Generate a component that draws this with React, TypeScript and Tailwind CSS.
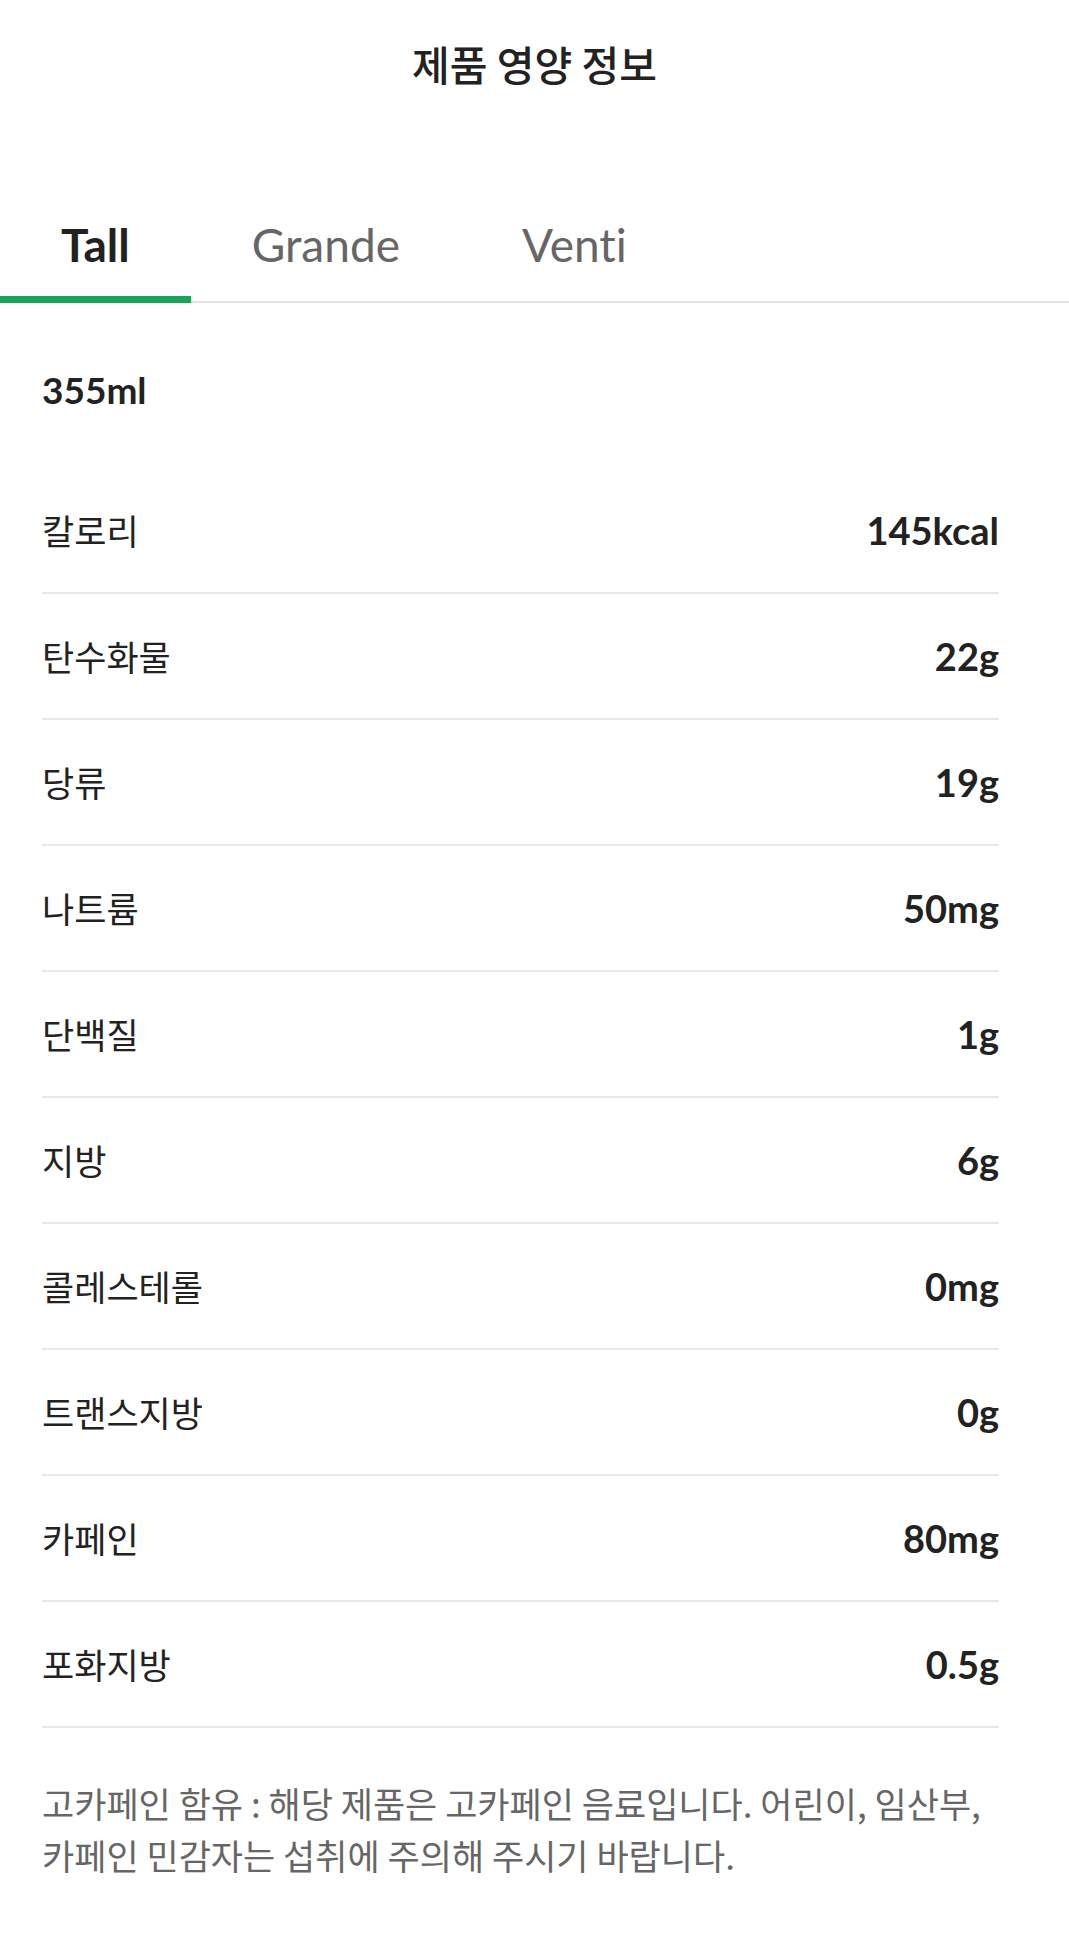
import { useState } from "react";

const SIZES = ["Tall", "Grande", "Venti"];

const ROWS: [string, string][] = [
  ["칼로리", "145kcal"],
  ["탄수화물", "22g"],
  ["당류", "19g"],
  ["나트륨", "50mg"],
  ["단백질", "1g"],
  ["지방", "6g"],
  ["콜레스테롤", "0mg"],
  ["트랜스지방", "0g"],
  ["카페인", "80mg"],
  ["포화지방", "0.5g"],
];

export default function App() {
  const [active, setActive] = useState(0);

  return (
    <div className="min-h-screen w-full bg-white font-['Lato','Noto_Sans_CJK_KR',sans-serif] text-[#222] [font-variant-ligatures:none]">
      {/* header */}
      <div className="flex h-[126px] items-center justify-center">
        <h1 className="font-['Noto_Sans_CJK_KR',sans-serif] text-[41px] font-medium leading-none text-[#222]">
          제품 영양 정보
        </h1>
      </div>

      {/* size tabs */}
      <div className="mt-[62px] flex border-b-2 border-[#e3e3e3]">
        {SIZES.map((s, i) => (
          <button
            key={s}
            onClick={() => setActive(i)}
            className={
              "-mb-[2px] border-b-[7px] px-[61px] pt-[27px] pb-[21px] text-[46px] leading-[60px] " +
              (i === active
                ? "border-[#19a35d] font-bold text-[#222]"
                : "border-transparent font-normal text-[#666]")
            }
          >
            {s}
          </button>
        ))}
      </div>

      <div className="pl-[42px] pr-[70px]">
        <div className="pt-[63px] pb-[54px] text-[37px] font-bold leading-[48px]">355ml</div>

        {ROWS.map(([label, value]) => (
          <div
            key={label}
            className="flex h-[126px] items-center justify-between border-b-2 border-[#e8e8e8]"
          >
            <span className="font-['Noto_Sans_CJK_KR',sans-serif] text-[35px] text-[#222]">{label}</span>
            <span className="text-[38px] font-bold text-[#222]">{value}</span>
          </div>
        ))}

        <p className="pt-[49px] pb-[55px] font-['Noto_Sans_CJK_KR',sans-serif] text-[35px] leading-[52px] text-[#666]">
          고카페인 함유 : 해당 제품은 고카페인 음료입니다. 어린이, 임산부,
          <br />
          카페인 민감자는 섭취에 주의해 주시기 바랍니다.
        </p>
      </div>
    </div>
  );
}
